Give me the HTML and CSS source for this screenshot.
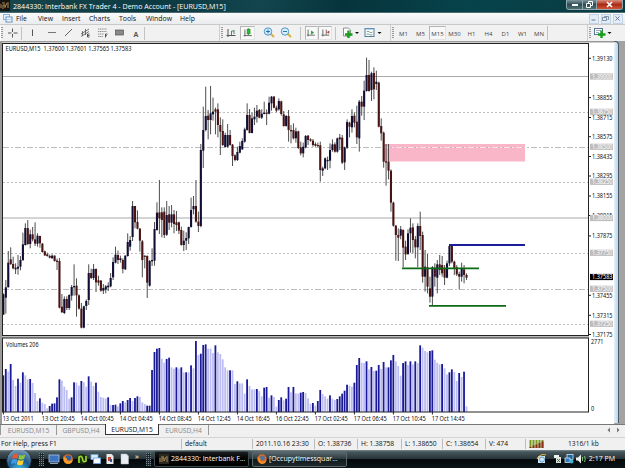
FILE: index.html
```
<!DOCTYPE html>
<html lang="en">
<head>
    <meta charset="UTF-8">
    <meta name="viewport" content="width=device-width, initial-scale=1.0">
    <title>Interbank FX Trader 4</title>
    <link rel="stylesheet" href="styles.css">
</head>
<body>
    <div class="titlebar">
        <svg class="app-icon" width="10" height="11" viewBox="0 0 10 11"><rect width="10" height="11" fill="#15140f"/><path d="M1 8V4M3 9V5h2v3M5 7l2-4M8 2v6M2 3h3" stroke="#b08a55" fill="none"/></svg>
        <span class="title">2844330: Interbank FX Trader 4 - Demo Account - [EURUSD,M15]</span>
        <div class="winbtns">
            <span><svg width="15" height="9" viewBox="0 0 15 9"><rect x="5" y="4" width="6" height="2" fill="#fff"/></svg></span>
            <span><svg width="13" height="9" viewBox="0 0 13 9"><path d="M5.500 4V1.500h4v4H8M3.500 3.500h4v4h-4z" stroke="#fff" fill="none"/></svg></span>
            <span class="close"><svg width="25" height="9" viewBox="0 0 25 9"><path d="M10 2l5 5M15 2l-5 5" stroke="#fff" stroke-width="1.6"/></svg></span>
        </div>
    </div>

    <div class="menubar">
        <svg class="menu-icon" width="10" height="10" viewBox="0 0 10 10"><rect x=".5" y="1.500" width="6" height="5" fill="#e9f3fb" stroke="#8ab3d6"/><rect x="3" y="4" width="6" height="5" fill="#fff" stroke="#5e93c4"/><path d="M4 7l1.500-1 1 1 2-1.500" stroke="#5e93c4" stroke-width=".7" fill="none"/></svg>
        <span>File</span><span>View</span><span>Insert</span><span>Charts</span><span>Tools</span><span>Window</span><span>Help</span>
        <div class="mdi">
            <span><svg width="9" height="9" viewBox="0 0 9 9"><path d="M2.500 6h4" stroke="#667b93"/></svg></span>
            <span><svg width="9" height="9" viewBox="0 0 9 9"><path d="M3.500 3.500v-1h4v3h-1M1.500 3.500h4v3h-4z" stroke="#667b93" stroke-width=".8" fill="none"/></svg></span>
            <span><svg width="9" height="9" viewBox="0 0 9 9"><path d="M2.500 2.500l4 4M6.500 2.500l-4 4" stroke="#667b93"/></svg></span>
        </div>
    </div>

    <div class="toolbar">
        <div class="group draw">
            <i class="grip"></i>
            <svg width="18" height="14" viewBox="0 0 18 14"><path d="M9.500 2.500v3.500M9.500 8v3.500M5 7h3.500M10.500 7h4" stroke="#555"/></svg>
            <i class="sep"></i>
            <svg width="21" height="14" viewBox="0 0 21 14"><path d="M10.500 3.500v6.500" stroke="#555"/></svg>
            <svg width="17" height="14" viewBox="0 0 17 14"><path d="M5 6.500h8" stroke="#777"/></svg>
            <svg width="17" height="14" viewBox="0 0 17 14"><path d="M5 10l7-7" stroke="#666"/></svg>
            <svg width="17" height="14" viewBox="0 0 17 14"><path d="M4 8l8-5M4 10.500l8-5M5.500 5v5M8.500 3v6" stroke="#555" stroke-width=".8"/><path d="M12.500 8h-2v3h2M10.500 9.500h2" stroke="#333" stroke-width=".8" fill="none"/></svg>
            <svg width="17" height="14" viewBox="0 0 17 14"><path d="M4 3h9M4 5.500h9M4 8h6M4 10.500h5" stroke="#777" stroke-width=".8" stroke-dasharray="1.300 .5"/><path d="M11.500 11.500v-3.500h2M11.500 9.700h1.500" stroke="#333" stroke-width=".8" fill="none"/></svg>
            <svg width="17" height="14" viewBox="0 0 17 14"><rect x="4.500" y="4" width="8" height="5" fill="#888" stroke="#555" stroke-width=".7"/></svg>
            <span class="tool-a">A</span>
        </div>
        <div class="group charts">
            <i class="grip"></i>
            <svg width="15" height="14" viewBox="0 0 15 14"><path d="M5 3v8M3.500 9.500h9" stroke="#555"/><path d="M8.500 5v4M11 4v4M8.500 5h2.500" stroke="#4a8f62" fill="none"/></svg>
            <svg class="pressed candle" width="15" height="14" viewBox="0 0 15 14"><path d="M4.500 3v8M3 10h9.500" stroke="#555"/><path d="M8.500 1.500v8" stroke="#18861f"/><rect x="7" y="2.500" width="3.500" height="5.500" fill="#28b92f" stroke="#18861f" stroke-width=".6"/></svg>
            <svg class="zoom-in" width="17" height="14" viewBox="0 0 17 14"><path d="M9.500 7.500l3.500 3.500" stroke="#d9b23b" stroke-width="2"/><circle cx="7" cy="5.500" r="3.700" fill="#d8f0ff" stroke="#4f94c4"/><path d="M5 5.500h4M7 3.500v4" stroke="#2277b5"/></svg>
            <svg width="17" height="14" viewBox="0 0 17 14"><path d="M9.500 7.500l3.500 3.500" stroke="#d9b23b" stroke-width="2"/><circle cx="7" cy="5.500" r="3.700" fill="#d8f0ff" stroke="#4f94c4"/><path d="M5 5.500h4" stroke="#2277b5"/></svg>
            <i class="sep"></i>
            <svg class="pressed" width="13" height="14" viewBox="0 0 13 14"><path d="M2.500 3v8M1 9.500h9.500" stroke="#555"/><path d="M6 4v5l3.500-2.500z" fill="#20a52a"/></svg>
            <svg class="pressed" width="14" height="14" viewBox="0 0 14 14"><path d="M4.500 3v8M3 9.500h9M8.500 3v6" stroke="#555"/><path d="M12 4v4L9 6z" fill="#c23535"/></svg>
            <i class="sep"></i>
            <svg width="22" height="14" viewBox="0 0 22 14"><path d="M3.500 2h5l2 2v6h-7z" fill="#fff" stroke="#777" stroke-width=".8"/><path d="M8.500 4.500v7.500M5 8.500h7.500" stroke="#159f1b" stroke-width="2.400"/><path d="M15 6h4l-2 2z" fill="#111"/></svg>
            <svg width="22" height="14" viewBox="0 0 22 14"><rect x="3" y="2.500" width="9" height="8" fill="#fff" stroke="#507f9f"/><path d="M3 3h9" stroke="#6da8cf"/><path d="M4.500 6q1.500-1.500 3 0t3 0M4.500 8.500q1.500-1.500 3 0t3 0" stroke="#477b63" stroke-width=".7" fill="none"/><path d="M15.500 6h4l-2 2z" fill="#111"/></svg>
        </div>
        <div class="group periods">
            <i class="grip"></i>
            <span>M1</span><span>M5</span><span class="pressed">M15</span><span>M30</span><span>H1</span><span>H4</span><span>D1</span><span>W1</span><span>MN</span>
        </div>
        <div class="group order">
            <i class="grip"></i>
            <svg width="21" height="14" viewBox="0 0 21 14"><rect x="3.500" y="2.500" width="8" height="6" fill="#fff" stroke="#55779a"/><path d="M5 4.500h5M5 6.500h3" stroke="#55779a" stroke-width=".6"/><path d="M10.500 4.500v7.500M7 8.500h7.500" stroke="#159f1b" stroke-width="2.400"/><path d="M16.500 6h4l-2 2z" fill="#111"/></svg>
        </div>
    </div>

    <div class="workspace">
        <svg class="chart" width="614" height="383" viewBox="0 41 614 383"></svg>
        <div class="frame-edge"></div>
    </div>

    <div class="tabs">
        <span>EURUSD,M15</span><span>GBPUSD,H4</span><span class="active">EURUSD,M15</span><span>EURUSD,H4</span>
        <svg class="tab-arrows" width="20" height="10" viewBox="0 0 20 10"><path d="M6 2.500v5L3.500 5zM13 2.500v5L15.500 5z" fill="#777"/></svg>
    </div>

    <div class="status">
        <span>For Help, press F1</span>
        <span>default</span>
        <span>2011.10.16 23:30</span>
        <span>O: 1.38736</span>
        <span>H: 1.38758</span>
        <span>L: 1.38650</span>
        <span>C: 1.38654</span>
        <span>V: 474</span>
        <span class="link">
            <svg width="15" height="8" viewBox="0 0 15 8"><path d="M1.500 0v8M4.500 0v8M7.500 0v8M10.500 0v8M13.500 0v8" stroke="#7a9a1e" stroke-width="2"/><path d="M1.500 7v1M4.500 5.500V8M7.500 4.500V8M10.500 3v5M13.500 1.500V8" stroke="#8c2f1c" stroke-width="2"/></svg>
        </span>
        <span>1316/1 kb</span>
    </div>

    <div class="taskbar">
        <svg class="start" width="26" height="18" viewBox="0 0 26 18">
            <defs><radialGradient id="orb" cx=".5" cy=".9" r=".9"><stop offset="0" stop-color="#46c6ee"/><stop offset=".5" stop-color="#1b5a8f"/><stop offset="1" stop-color="#8aa3b8"/></radialGradient></defs>
            <circle cx="13" cy="10.500" r="12.300" fill="url(#orb)" stroke="#16242f" stroke-width=".8"/>
            <path d="M7 5q3-2 5.500-.5l-1 4.200q-2.500-1.200-5.500.3z" fill="#e8582a"/>
            <path d="M13.300 4.800q3 1.500 6-.3l-1.200 4.500q-3 1.500-5.800 0z" fill="#8cc63e"/>
            <path d="M5.800 9.800q3-1.500 5.400-.2l-1.100 4.300q-2.500-1.300-5.300.2z" fill="#3d9be9"/>
            <path d="M12 10q3 1.400 5.800 0l-1.200 4.400q-3 1.600-5.700-.1z" fill="#ffd034"/>
        </svg>
        <i class="dots"></i>
        <div class="quick">
            <svg width="14" height="12" viewBox="0 0 14 12"><rect x="2" y="2" width="10" height="7" fill="#3d74bf" stroke="#a9c6e6" stroke-width=".8"/><path d="M3 10.500h8" stroke="#8fa5bb"/></svg>
            <svg width="14" height="12" viewBox="0 0 14 12"><circle cx="7" cy="6" r="4.800" fill="#e66a1b"/><circle cx="7.300" cy="5" r="2.800" fill="#2e5fa8"/><path d="M2.500 3q1 2 3.500 2-1 3 3 3 2 0 3-2-.5 5-5 5-5 0-4.500-8z" fill="#f7992b"/></svg>
            <svg width="14" height="12" viewBox="0 0 14 12"><circle cx="7" cy="6" r="4.900" fill="#17300d"/><path d="M4 10V4q3-2 3.500 2t3.500 2V3" stroke="#9bd42e" stroke-width="1.700" fill="none"/></svg>
            <svg width="14" height="12" viewBox="0 0 14 12"><rect x="2" y="1.500" width="7" height="5" fill="#d6ebfb" stroke="#6fa9da" stroke-width=".8"/><rect x="4.500" y="5" width="7" height="5.500" fill="#f3f9fe" stroke="#6fa9da" stroke-width=".8"/></svg>
            <svg width="14" height="12" viewBox="0 0 14 12"><path d="M3.500 1h5l2 2v8h-7z" fill="#e9e9e9"/><path d="M5 4h3v4H5z" fill="#c8442e"/><path d="M7 6h2v3H7z" fill="#3a4f8a"/></svg>
            <svg width="15" height="12" viewBox="0 0 15 12"><path d="M4 1h5.500l2 2v8H4z" fill="#e8eef2" stroke="#b6c0c8" stroke-width=".5"/></svg>
            <span class="more">»</span>
        </div>
        <i class="dots"></i>
        <div class="task current">
            <svg width="10" height="10" viewBox="0 0 10 10"><rect width="10" height="10" fill="#2b2820"/><path d="M1 8V4M3 8V4h2v3M5 7l2-4M8 2v6M2 3h3" stroke="#a98a5b" fill="none"/></svg>
            <span>2844330: Interbank F...</span>
        </div>
        <div class="task">
            <svg width="10" height="10" viewBox="0 0 10 10"><circle cx="5" cy="5" r="4.700" fill="#e66a1b"/><circle cx="5.300" cy="4" r="2.600" fill="#5b6f94"/><path d="M.5 2.500q1 2 3 2-1 3 3 3 2 0 3-2-.5 4.500-4.500 4.500T.5 2.500z" fill="#f28a25"/></svg>
            <span>[Occupytimessquar...</span>
        </div>
        <div class="tray">
            <svg class="notes" width="18" height="12" viewBox="0 0 18 12"><rect x="4" y="3" width="7" height="7" fill="#d5e4ee"/><path d="M3 6q4-6 9-4" stroke="#e3b53e" stroke-width="1.200" fill="none"/><circle cx="8" cy="6.500" r="2.500" fill="none" stroke="#4ba3dd"/></svg>
            <svg width="11" height="12" viewBox="0 0 11 12"><rect x="1" y="2" width="5" height="3" fill="#f0f0f0"/><path d="M3 4h5v6H3z" fill="#dfe5df"/><path d="M4 6l3 3M7 6L4 9" stroke="#2f5c2c" stroke-width=".8"/></svg>
            <svg width="11" height="12" viewBox="0 0 11 12"><rect x="3" y="1.500" width="6" height="5" fill="#1c5f9e" stroke="#d6e5f0" stroke-width=".8"/><rect x="1" y="5" width="5" height="4.500" fill="#2a7db8" stroke="#d6e5f0" stroke-width=".8"/><circle cx="7.500" cy="8.500" r="2" fill="#3fb0d8"/></svg>
            <svg width="11" height="12" viewBox="0 0 11 12"><path d="M1 4.500h2l3-3v9l-3-3H1z" fill="#eee"/><path d="M7.500 4v4M9.500 3q1.500 3 0 6" stroke="#7ed07c" stroke-width=".9" fill="none"/></svg>
            <span class="clock">2:17 PM</span>
        </div>
    </div>
    <script src="chart.js"></script>
</body>
</html>
```
FILE: styles.css
```
*{
    margin: 0;
    padding: 0;
    box-sizing: border-box;
}
body{
    width: 625px;
    height: 468px;
    overflow: hidden;
    display: flex;
    flex-direction: column;
    background: #f0f0f0;
    font-family: "Open Sans", "Noto Sans", sans-serif;
    font-size: 7px;
    line-height: 10px;
    color: #111;
    white-space: nowrap;
}
svg{
    display: block;
    flex: none;
}

/* title */
.titlebar{
    height: 13px;
    display: flex;
    align-items: flex-start;
    background: linear-gradient(100deg, #18464c 0%, #0c3a42 25%, #12454e 42%, #06343c 55%, #07434b 75%, #0a3a41 100%);
    border-bottom: 1px solid #4d6a70;
}
.title{
    margin-left: 3px;
    line-height: 12px;
    color: #fff;
    font-size: 7.100px;
}
.winbtns{
    margin-left: auto;
    margin-right: 2px;
    display: flex;
    border: 1px solid #93a7ad;
    border-top: 0;
    border-radius: 0 0 3px 3px;
    overflow: hidden;
}
.winbtns span{
    background: linear-gradient(#7f969d, #2d4d55 50%, #4f6f76);
    border-right: 1px solid #93a7ad;
}
.winbtns .close{
    background: linear-gradient(#d9917f, #a92a15 50%, #cf5634);
    border-right: 0;
}

/* menu */
.menubar{
    height: 12px;
    display: grid;
    grid-template-columns: 13px 22px 24px 27px 30px 27px 34px 30px 1fr;
    padding-left: 3px;
    background: linear-gradient(#fafafa, #e9ebee);
    border-bottom: 1px solid #c9c9c9;
    line-height: 11px;
    font-size: 6.900px;
}
.mdi{
    justify-self: end;
    display: flex;
    gap: 2px;
    padding: 1px 2px 0 0;
}
.mdi span{
    background: #e4edf7;
    border: 1px solid #c3d2e2;
    width: 10px;
    height: 10px;
}
.mdi svg{
    margin: -1px 0 0 -1px;
}

/* toolbar */
.toolbar{
    height: 16px;
    display: grid;
    grid-template-columns: 219px 171px 197px 1fr;
    background: #f1f1f1;
}
.group{
    display: flex;
    align-items: center;
    padding-left: 1px;
    border-left: 1px solid #fff;
}
.grip{
    width: 2px;
    height: 12px;
    background: repeating-linear-gradient(#9a9a9a 0 1px, #eee 1px 2px);
}
.sep{
    width: 1px;
    height: 13px;
    background: #c2c2c2;
}
.draw{
    padding-left: 0;
}
.tool-a{
    width: 17px;
    height: 13px;
    line-height: 15px;
    text-align: center;
    font-weight: bold;
    color: #555;
    border-right: 1px solid #c2c2c2;
}
.charts, .periods, .order{
    border-left: 1px solid #cfcfcf;
}
.pressed{
    background: #f8f8f8;
    border: 1px solid #b5b5b5;
    border-right-color: #e3e3e3;
    border-bottom-color: #e3e3e3;
}
.candle{
    margin-left: 2px;
}
.zoom-in{
    margin-left: 6px;
}
.charts .sep{
    margin: 0 4px 0 5px;
}
.charts .sep ~ .sep{
    margin-left: 3px;
}
.periods{
    color: #444;
    font-size: 6px;
}
.periods span{
    width: 17px;
    height: 14px;
    line-height: 16px;
    text-align: center;
}
.periods .pressed{
    line-height: 14px;
}
.periods .grip{
    margin-right: 1px;
}
.periods span:last-child{
    border-right: 1px solid #c2c2c2;
}

/* chart window */
.workspace{
    height: 383px;
    display: flex;
    background: #a3a3a3;
}
.chart{
    background: #fff;
}
.frame-edge{
    width: 5px;
    height: 382px;
    background: linear-gradient(90deg, #e6f1fa, #bcd4e8);
    border-right: 1px solid #4b5b68;
    border-top: 1px solid #4b5b68;
    border-top-right-radius: 4px;
}

/* chart tabs */
.tabs{
    height: 13px;
    display: flex;
    border-top: 1px solid #777;
    font-size: 6.700px;
    color: #888;
    background: #f0f0f0;
}
.tabs span{
    width: 50px;
    height: 10px;
    text-align: center;
    line-height: 11px;
    border-right: 1px solid #999;
}
.tabs span:first-child{
    width: 57px;
    border-left: 1px solid #999;
}
.tabs span:nth-child(2){
    width: 48px;
    border-right: 0;
}
.tabs .active{
    width: 54px;
    height: 11px;
    margin-top: -1px;
    background: #fff;
    color: #111;
    border: 1px solid #333;
    border-top: 0;
    line-height: 12px;
}
.tab-arrows{
    margin-left: auto;
    margin-right: 1px;
}

/* status bar */
.status{
    height: 13px;
    display: grid;
    grid-template-columns: 181px 71px 62px 43px 44px 41px 43px 40px 40px 1fr;
    align-items: center;
    font-size: 6.700px;
    border-top: 1px solid #d4d4d4;
}
.status span{
    height: 10px;
    padding-left: 3px;
    border-left: 1px solid #bbb;
}
.status span:first-child{
    border-left: 0;
    padding-left: 1px;
}
.status span:last-child{
    border-left-color: transparent;
    padding-left: 2px;
}
.link svg{
    margin-top: 1px;
}

/* taskbar */
.taskbar{
    flex: 1;
    display: flex;
    align-items: center;
    padding-left: 6px;
    background: linear-gradient(#7b8a8e 0, #46555a 2px, #263338 9px, #04090b 9px, #0a1417 100%);
    color: #fff;
}
.dots{
    width: 5px;
    height: 13px;
    margin: 0 3px 0 7px;
    background: repeating-linear-gradient(90deg, transparent 0 1px, #1d2a2f 1px 2px), repeating-linear-gradient(#77868b 0 1px, #1d2a2f 1px 2px);
}
.quick{
    display: flex;
    align-items: center;
}
.more{
    margin: -7px 0 0 3px;
    font-size: 8px;
}
.task{
    display: flex;
    align-items: center;
    gap: 2px;
    width: 95px;
    height: 16px;
    padding-left: 4px;
    margin-right: 3px;
    border: 1px solid #5a686c;
    border-radius: 2px;
    background: linear-gradient(#5a696d, #2b383c 50%, #11191b 50%, #1e292c);
    font-size: 7px;
}
.current{
    background: linear-gradient(#1a1d1e, #000 50%);
    border-color: #3f4a4e;
}
.tray{
    margin-left: auto;
    display: flex;
    align-items: center;
}
.notes{
    margin-right: 1px;
}
.clock{
    margin: 0 10px 0 3px;
    font-size: 7px;
}

/* chart contents */
.axis{
    font-family: "Noto Sans", "Open Sans", sans-serif;
    font-size: 6.300px;
    fill: #111;
}
.tag-text{
    fill: #fff;
}
.frame{
    fill: none;
    stroke: #222;
}
.level{
    stroke: #a8a8a8;
}
.dash{
    stroke-dasharray: 2 2;
    stroke: #bdbdbd;
}
.dashdot{
    stroke-dasharray: 6 2 2 2;
    stroke: #bdbdbd;
}
.wick{
    stroke: #3a3a3a;
    stroke-width: .9;
}
.up{
    fill: #100e34;
}
.down{
    fill: #481313;
}
```
FILE: chart.js
```
var svg = document.querySelector('.chart')
var x0 = 3.4
var step = 2.4375

function add (tag, attrs, text) {
    var el = document.createElementNS('http://www.w3.org/2000/svg', tag)
    for (var k in attrs) {
        el.setAttribute(k, attrs[k])
    }
    if (text) {
        el.textContent = text
    }
    svg.appendChild(el)
    return el
}

// each bar: high, body top, body bottom, low (thirds of a pixel from y), u = up / d = down
var parts = [
    { y: 200, bars: '280 283 344 344 u,240 262 293 341 u,153 188 262 262 u,142 178 192 195 d,170 192 205 208 d,190 203 208 222 u,165 200 206 224 u,168 180 200 211 u,98 133 181 181 u,70 84 135 137 u,60 84 132 135 d,89 103 132 145 u,81 103 118 124 d,67 118 131 138 d,100 107 131 140 u,107 108 130 143 d,129 131 156 158 d,152 154 166 168 d,158 163 168 170 d,164 168 173 175 d,163 167 175 176 u,166 167 183 185 d,176 182 186 210 d,174 183 323 325 d,282 320 337 338 d,289 297 339 342 u,289 297 324 330 d,283 285 324 330 u,255 261 287 302 u,193 258 262 287 u,235 257 286 350 d,283 286 326 329 d,309 326 383 385 d,317 319 383 385 u,298 303 318 330 u,193 219 300 315 u,206 219 234 237 d,192 207 234 240 u,205 207 247 276 d,227 241 248 257 d,240 242 272 275 d,252 264 272 282 u,255 259 269 280 u,247 257 262 273 u,219 234 259 262 u,172 186 232 240 u,140 164 188 190 u,152 165 180 192 d,167 175 180 188 u,175 180 207 220 d,166 167 208 210 u,100 126 168 170 u,108 120 140 152 u,3 18 111 123 u,18 18 67 85 d,31 66 86 88 d,84 86 122 155 d,120 124 180 232 d,166 167 170 205 d,166 168 248 294 d,180 183 257 260 u,145 180 184 198 u,66 87 182 197 u' },
    { y: 70, bars: '397 428 480 482 u,330 427 445 492 d,412 427 450 502 d,412 425 495 504 d,393 435 494 498 u,408 433 458 480 d,405 433 458 472 u,420 433 462 490 d,423 457 465 483 d,455 457 482 492 d,470 480 525 527 d,482 512 525 543 u,487 504 512 540 u,470 471 505 522 u,383 420 471 473 u,378 408 418 433 u,330 408 455 458 d,425 455 468 486 d,222 240 468 472 u,110 180 242 294 u,50 138 180 184 u,120 137 150 208 d,48 130 150 193 u,83 125 133 152 u,113 118 125 193 d,100 118 165 202 d,142 165 185 255 d,148 183 225 228 d,188 195 231 233 u,162 195 230 233 u,180 195 225 227 d,222 224 258 288 d,253 256 270 274 d,230 246 270 273 u,215 228 248 250 u,205 213 238 240 u,173 178 215 218 u,100 135 180 182 u,117 135 189 190 d,128 145 189 190 u,113 140 148 165 u,105 122 140 158 u,117 120 143 145 d,118 131 143 147 u,95 128 132 133 u,118 128 131 165 d,80 98 131 133 u,78 80 100 122 u,78 80 113 115 d,107 113 122 127 d,85 93 118 122 u,92 94 132 137 d,123 133 168 170 d,135 138 168 170 u,120 138 180 215 d,165 180 184 220 d,160 180 205 208 d,173 184 205 218 u,182 184 234 237 d,215 232 250 256 d,218 230 250 262 u,195 198 232 235 u' },
    { y: 50, bars: '255 257 270 285 d,265 268 272 275 d,267 272 285 290 d,277 282 287 290 d,278 285 289 290 d,275 286 360 395 d,350 355 362 378 u,322 325 355 358 u,320 330 333 360 u,280 300 332 355 u,268 283 300 305 u,277 283 305 308 d,263 265 305 308 u,252 262 268 300 d,255 263 338 342 d,290 292 337 360 u,208 216 293 297 u,215 218 230 262 d,178 198 232 248 u,187 197 218 232 d,167 215 262 282 d,150 155 265 305 u,138 155 170 197 d,92 122 170 210 u,23 75 123 125 u,30 75 123 125 d,65 70 120 153 u,52 69 118 148 d,62 95 102 120 u,95 98 230 232 d,205 228 250 272 d,245 248 335 353 d,282 334 338 407 d,282 335 362 388 d,358 362 458 485 d' },
    { y: 180, bars: '65 68 137 140 d,135 137 165 242 d,145 165 173 243 d,138 148 167 178 u,148 150 203 262 d,182 200 223 240 d,148 160 222 225 u,115 143 160 218 u,130 142 180 220 d,168 178 202 235 d,130 138 202 262 u,95 138 168 210 d,155 165 290 308 d,210 260 290 335 u,222 262 320 340 d,290 325 350 368 d,258 262 350 378 u,250 263 290 320 d,240 253 293 340 u,225 253 270 285 d,228 255 280 290 d,255 265 293 315 d,242 250 293 295 u,195 198 250 258 u,195 198 245 250 d,242 245 265 285 d,255 262 283 288 d,275 282 290 328 d,248 265 290 305 u,255 268 285 310 d,280 285 293 300 d' }
]

// bar height in thirds of a pixel, a trailing d marks a rising (dark) bar
var volumes = '121d 102d 110 87d 135 153 131d 143 112d 121 133 132d 144 174 198 190d 203 207 220 213d 206d 205d 187d 133d 137 155 165 191 187d 142d 143 152 138d 142 155 124d 140 153 143d 170 186 188 190 187d 210 210d 209d 214 205d 198d 202 195d 189d 198 189d 184d 186 202 207 212d 212d 105d 51d 41d 39d 71 83 72d 68d 97 101 97d 101 97d 112 112d 112 91d 100 18d 60 56d 30d 28d 41 41 54 31d 52 57 73 97 106 106d 106 147 139d 145 145 176 133d 153 163 163 162d 168 184 158d 156d 188 181d 186 215 195d 187d 196 191d 156d 172 156d 175 176 173d 171d 174 190 206 204d 212 198d 165d 177 184 191 181d 191 195 192d 184d 176d 167d 149d 152 155 143d 90d 69d 83 84 79d 103 96d 108 107d 90d 102 81d 97 97d 76d 60d 79 93 122 84d 79d 90 79d 88 79d 84 31d 38 48 52 48d 46d 74 83 88 87d 100 118 112d 103d 111 138 114d 126 110d 214'.split(' ')

// window background between the panes
add('rect', { x: 0, y: 41, width: 2, height: 383, fill: '#9a9a9a' })
add('rect', { x: 0, y: 41, width: 614, height: 1.5, fill: '#999' })
add('rect', { x: 2, y: 335, width: 587, height: 3, fill: '#bdbdbd' })

// supply zone
add('rect', { x: 384, y: 144, width: 141, height: 17.5, fill: '#f9b6c8' })

// round number levels
var levels = [
    [76.5, '1.39000', ''], [112.5, '1.38750', 'dash'], [147.5, '1.38500', 'dashdot'], [182.5, '1.38250', 'dash'],
    [218, '1.38000', ''], [253.5, '1.37750', 'dash'], [289.5, '1.37500', 'dashdot'], [324.5, '1.37250', 'dash']
]
levels.forEach(function (l) {
    add('line', { x1: 3, x2: 588, y1: l[0], y2: l[0], class: 'level ' + l[2] })
})
add('line', { x1: 384, x2: 525, y1: 147.5, y2: 147.5, stroke: '#fbe0e8', 'stroke-dasharray': '6 2 2 2' })

// candles
var n = 0
parts.forEach(function (p) {
    p.bars.split(',').forEach(function (s) {
        var b = s.split(' ')
        var x = x0 + step * n
        add('line', { x1: x, x2: x, y1: p.y + b[0] / 3, y2: p.y + b[3] / 3, class: 'wick' })
        add('rect', { x: x - 1.05, y: p.y + b[1] / 3, width: 2.1, height: Math.max(1.2, (b[2] - b[1]) / 3), class: b[4] === 'u' ? 'up' : 'down' })
        n++
    })
})

// trade lines
add('path', { d: 'M402 268.300H479M429 305.800H506', stroke: '#0c6a14', 'stroke-width': 1.8 })
add('path', { d: 'M449 245H525', stroke: '#1a1e9c', 'stroke-width': 1.8 })

// volumes
volumes.forEach(function (v, i) {
    var dark = v.indexOf('d') > 0
    var top = 335 + parseInt(v) / 3
    add('rect', { x: x0 + step * i - 0.95, y: top, width: 1.8, height: 412 - top, fill: dark ? '#1a1a98' : '#bcbcf4' })
})

add('rect', { x: 2.5, y: 43.5, width: 586, height: 292, class: 'frame' })
add('rect', { x: 2.5, y: 338, width: 586, height: 74, class: 'frame' })

function label (x, y, w, text, cls) {
    add('text', { x: x, y: y, textLength: w, lengthAdjust: 'spacingAndGlyphs', class: 'axis ' + (cls || '') }, text)
}

label(5.5, 51, 126, 'EURUSD,M15\u00a0 1.37600 1.37601 1.37565 1.37583')
label(6, 346.500, 32.5, 'Volumes 206')

// price scale
var prices = [
    [58.3, '1.39130'], [97.6, '1.38855'], [117.5, '1.38715'], [136.7, '1.38575'], [156.5, '1.38435'], [176, '1.38295'],
    [196, '1.38155'], [215.5, '1.38015'], [235.9, '1.37875'], [295.3, '1.37455'], [315.3, '1.37315'], [334.5, '1.37175']
]
prices.forEach(function (p) {
    add('line', { x1: 589, x2: 591, y1: p[0], y2: p[0], stroke: '#222' })
    label(592, p[0] + 2.2, 20.5, p[1])
})
function tag (y, text, fill) {
    add('rect', { x: 590, y: y - 3.1, width: 23, height: 6.2, fill: fill })
    label(592, y + 2.2, 20.5, text, 'tag-text')
}
levels.forEach(function (l) {
    tag(l[0] - (l[2] ? 0.7 : 0), l[1], '#bdbdbd')
})
tag(277, '1.37583', '#000')
label(591, 343.500, 12.5, '2771')
label(591, 411, 3.2, '0')

// time scale
var times = ['13 Oct 2011', '13 Oct 20:45', '14 Oct 00:45', '14 Oct 04:45', '14 Oct 08:45', '14 Oct 12:45', '14 Oct 16:45', '16 Oct 22:45', '17 Oct 02:45', '17 Oct 06:45', '17 Oct 10:45', '17 Oct 14:45']
times.forEach(function (t, i) {
    var x = x0 + 39 * i
    add('line', { x1: x, x2: x, y1: 412, y2: 414.5, stroke: '#222' })
    label(x - 0.7, 420.700, i ? 33 : 31, t)
})
```
